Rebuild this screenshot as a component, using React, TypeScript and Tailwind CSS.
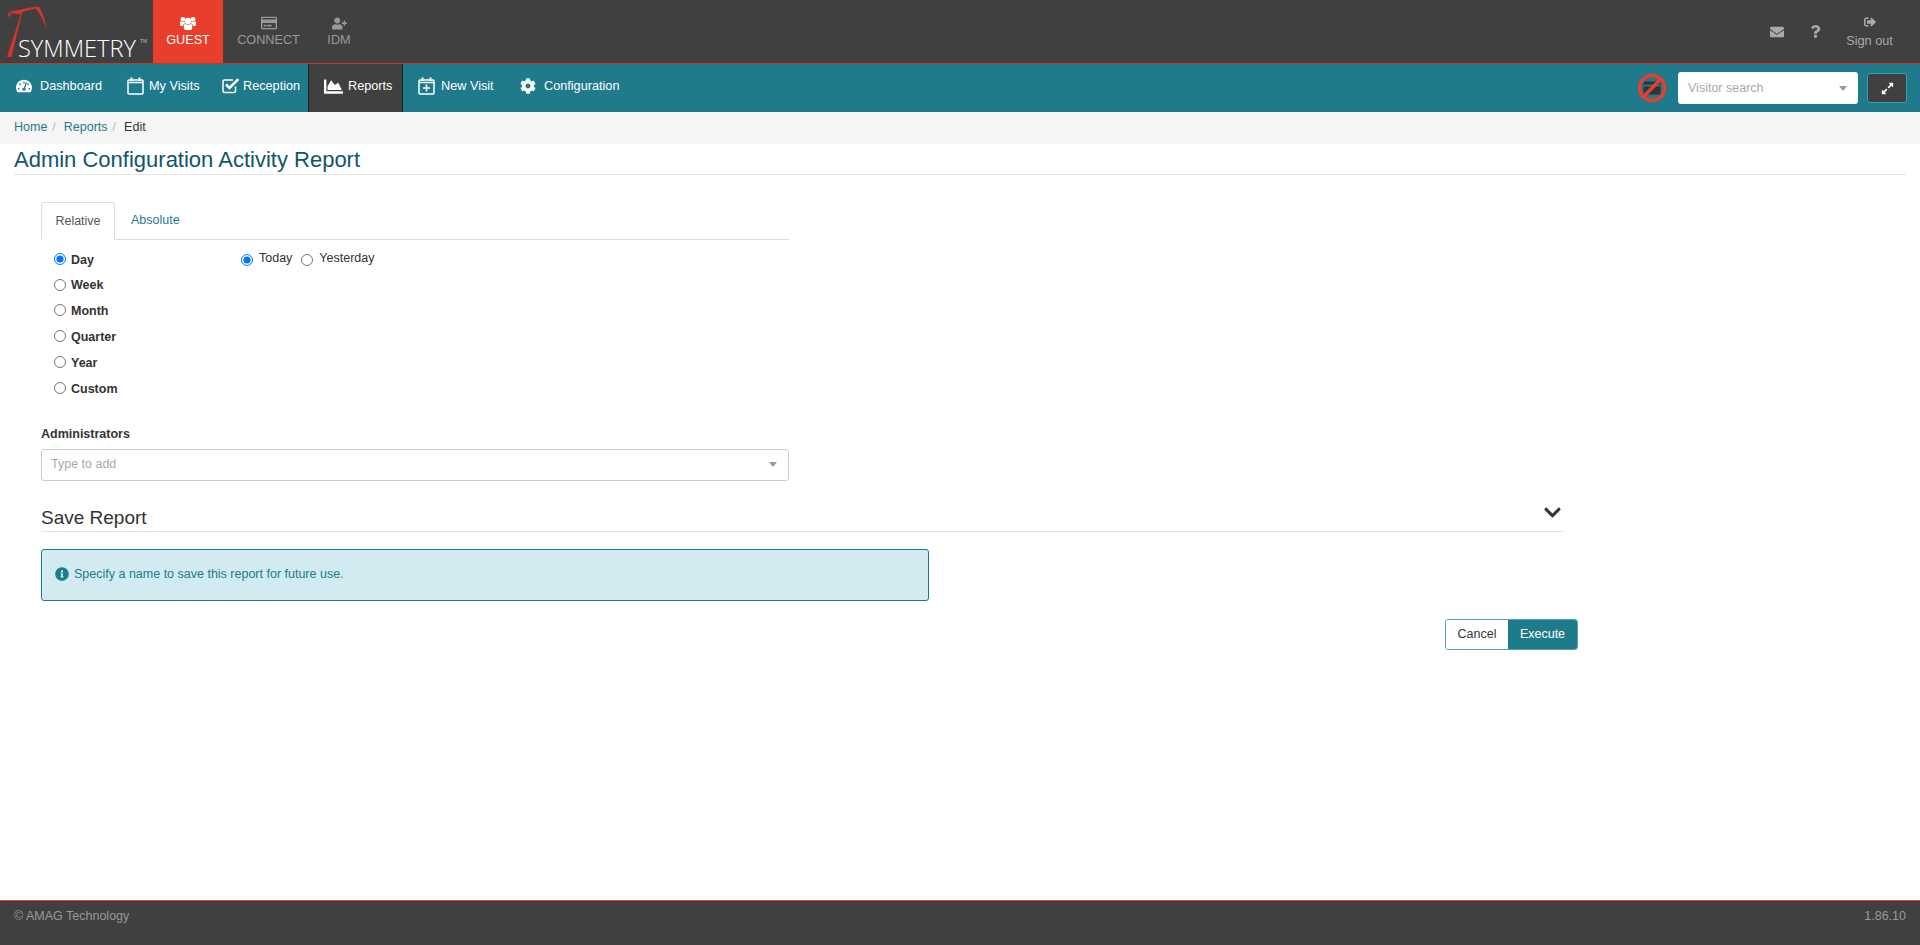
import {
  FaChartArea,
  FaChevronDown,
  FaCog,
  FaEnvelope,
  FaExpandAlt,
  FaInfoCircle,
  FaQuestion,
  FaRegCreditCard,
  FaSignOutAlt,
  FaTachometerAlt,
  FaUserPlus,
} from "react-icons/fa";
import type { ReactNode } from "react";

const UsersIcon = () => (
  <svg viewBox="0 0 16 14" className="h-[14px] w-[16px]" fill="currentColor">
    <circle cx="8" cy="5" r="3.3" />
    <circle cx="2.9" cy="3.2" r="2.3" />
    <circle cx="13.1" cy="3.2" r="2.3" />
    <path d="M3.8 10 C3.8 8.5 4.5 8 5.5 8 C6.5 9 9.5 9 10.5 8 C11.5 8 12.2 8.5 12.2 10 L12.2 12 C12.2 13.5 11 14 10 14 L6 14 C5 14 3.8 13.5 3.8 12 Z" />
    <path d="M0 6.5 C0 5.5 .6 5.3 1 5.3 C2 6.2 3.5 6.2 4.4 5.8 C4.6 6.8 5 7.2 5.2 7.5 C3.8 7.7 3 8.8 3 10 L1.2 10 C.5 10 0 9.5 0 8.8 Z" />
    <path d="M16 6.5 C16 5.5 15.4 5.3 15 5.3 C14 6.2 12.5 6.2 11.6 5.8 C11.4 6.8 11 7.2 10.8 7.5 C12.2 7.7 13 8.8 13 10 L14.8 10 C15.5 10 16 9.5 16 8.8 Z" />
  </svg>
);

const CalendarIcon = ({ plus }: { plus?: boolean }) => (
  <svg viewBox="0 0 17 18" className="h-[18px] w-[17px]" fill="none" stroke="currentColor">
    <rect x="1" y="3" width="15" height="14" rx="1" strokeWidth="1.5" />
    <path d="M1 5.5 H16" strokeWidth="1.5" />
    <path d="M4.5 .5 V4 M12.5 .5 V4" strokeWidth="2" />
    {plus && <path d="M8.5 7.5 V14.5 M5 11 H12" strokeWidth="1.6" />}
  </svg>
);

const CheckSquareIcon = () => (
  <svg viewBox="0 0 18 17" className="h-[17px] w-[18px]" fill="none" stroke="currentColor">
    <path d="M13.5 9.5 V14 C13.5 15 13 15.5 12 15.5 H2.5 C1.5 15.5 1 15 1 14 V4.5 C1 3.5 1.5 3 2.5 3 H11" strokeWidth="1.5" />
    <path d="M4 7.5 L7.5 11 L16.3 2.2" strokeWidth="2.6" />
  </svg>
);

type NavItem = {
  label: string;
  icon: ReactNode;
  className: string;
  active?: boolean;
};

const navItems: NavItem[] = [
  { label: "Dashboard", icon: <FaTachometerAlt className="mr-[8px] -mt-[4px] text-[16px]" />, className: "w-[111px] pl-[16px]" },
  { label: "My Visits", icon: <span className="mr-[5px] -mt-[5px]"><CalendarIcon /></span>, className: "w-[95px] pl-[16px]" },
  { label: "Reception", icon: <span className="mr-[3px] -mt-[6px]"><CheckSquareIcon /></span>, className: "w-[102px] pl-[16px]" },
  { label: "Reports", icon: <FaChartArea className="mr-[5px] -mt-1 text-[19px]" />, className: "w-[95px] pl-[15px]", active: true },
  { label: "New Visit", icon: <span className="mr-[6px] -mt-[5px]"><CalendarIcon plus /></span>, className: "w-[102px] pl-[15px]" },
  { label: "Configuration", icon: <FaCog className="mr-[8px] -mt-1 text-[16px]" />, className: "w-[115px] pl-[15px]" },
];

const ranges = ["Day", "Week", "Month", "Quarter", "Year", "Custom"];

const Logo = () => (
  <div className="relative h-[63px] w-[153px] shrink-0">
    <svg viewBox="0 0 150 64" className="absolute left-0 top-0 h-[64px] w-[150px]" fill="#d8332a">
      <path d="M8 16 C8 12.5 11 11 15 10.5 C23 9.5 32 6.5 39 6.5 C42 11 45 20 47 29 C43 20 39.5 13 36 8.5 C31 9 27 10.5 22 12.5 L21.5 14.5 L11 13.2 L10 17 Z" />
      <path d="M20.5 15 L21.5 15 C18.5 28 14.5 44 11.5 57 L7 57 C11 44 16.5 28 20.5 15 Z" />
    </svg>
    <span className="absolute left-[18px] top-[32px] font-['Open_Sans',sans-serif] text-[23.6px] font-light leading-[32px] text-white">
      SYMMETRY
    </span>
    <span className="absolute left-[140px] top-[38px] text-[5px] leading-[6px] text-[#bbbbbb]">TM</span>
  </div>
);

const Module = ({ label, icon, className }: { label: string; icon: ReactNode; className: string }) => (
  <div className={`flex h-[63px] flex-col items-center pt-[16px] ${className}`}>
    <div className="flex h-[14px] items-center">{icon}</div>
    <span className="text-[12.7px] leading-[20px]">{label}</span>
  </div>
);

const TopBar = () => (
  <header className="flex h-[64px] items-start border-b border-[#c0392b] bg-[#404040]">
    <Logo />
    <Module label="GUEST" icon={<UsersIcon />} className="w-[70px] bg-[#e83e2b] text-white" />
    <Module label="CONNECT" icon={<FaRegCreditCard className="text-[16px]" />} className="w-[90px] pl-[1px] text-[#999999]" />
    <Module label="IDM" icon={<FaUserPlus className="text-[15px]" />} className="ml-[14px] w-[24px] text-[#999999]" />
    <div className="ml-auto mr-[27px] flex items-start text-[#aaaaaa]">
      <FaEnvelope className="mr-[25px] mt-[25px] text-[14px]" />
      <FaQuestion className="mr-[24px] mt-[25px] text-[13px]" />
      <div className="flex w-[47px] flex-col items-center pt-[16px]">
        <FaSignOutAlt className="text-[12px]" />
        <span className="mt-[4px] whitespace-nowrap text-[12.7px] leading-[18px]">Sign out</span>
      </div>
    </div>
  </header>
);

const NoCardIcon = () => (
  <svg viewBox="0 0 30 30" className="h-[30px] w-[30px]">
    <rect x="6.5" y="8.5" width="17" height="13" rx="1.5" fill="#333333" />
    <rect x="6.5" y="11.5" width="17" height="2" fill="#1f7a8c" />
    <circle cx="15" cy="15" r="12.5" fill="none" stroke="#e83e2b" strokeWidth="3.5" />
    <path d="M6 24 L24 6" stroke="#e83e2b" strokeWidth="3.5" />
  </svg>
);

const NavBar = () => (
  <nav className="flex h-[48px] items-stretch bg-[#1f7a8c]">
    {navItems.map(({ label, icon, className, active }) => (
      <a
        key={label}
        className={`flex items-center whitespace-nowrap text-[12.7px] text-white ${className} ${
          active ? "border-x border-[#222222] bg-[#404040]" : ""
        }`}
      >
        {icon}
        <span className="-mt-[2px]">{label}</span>
      </a>
    ))}
    <div className="ml-auto mr-[13px] flex items-center">
      <NoCardIcon />
      <div className="ml-[11px] flex h-[32px] w-[180px] items-center justify-between rounded-[3px] bg-white pl-[10px] pr-[11px] text-[12.5px] text-[#aaaaaa]">
        <span>Visitor search</span>
        <span className="h-0 w-0 border-x-[4px] border-t-[5px] border-x-transparent border-t-[#999999]" />
      </div>
      <button className="ml-[9px] flex h-[30px] w-[40px] items-center justify-center rounded-[3px] border border-[#2fa3b8] bg-[#404040] text-white">
        <FaExpandAlt className="text-[13px]" />
      </button>
    </div>
  </nav>
);

const Breadcrumb = () => (
  <div className="flex h-[32px] items-center rounded-[4px] bg-[#f5f5f5] pb-[2px] pl-[14px] text-[12.5px] text-[#333333]">
    <a className="text-[#1f7a8c]">Home</a>
    <span className="ml-[5px] mr-[8px] text-[#bbbbbb]">/</span>
    <a className="text-[#1f7a8c]">Reports</a>
    <span className="ml-[5px] mr-[8px] text-[#bbbbbb]">/</span>
    <span>Edit</span>
  </div>
);

const Radio = ({ name, checked }: { name: string; checked?: boolean }) => (
  <input type="radio" name={name} defaultChecked={checked} className="m-0 h-[12px] w-[12px] shrink-0" />
);

const RangeForm = () => (
  <div className="flex w-[748px] items-start">
    <div className="flex w-[200px] flex-col pl-[13px] pt-[6px]">
      {ranges.map((range, i) => (
        <label key={range} className="flex h-[25.8px] items-center text-[12.5px] font-bold text-[#333333]">
          <Radio name="range" checked={i === 0} />
          <span className="ml-[5px] pt-[2px]">{range}</span>
        </label>
      ))}
    </div>
    <div className="flex items-center pt-[12px] text-[12.5px] text-[#333333]">
      <Radio name="day" checked />
      <span className="ml-[6px] -mt-[3px]">Today</span>
      <span className="ml-[9px] flex items-center">
        <Radio name="day" />
        <span className="ml-[6px] -mt-[3px]">Yesterday</span>
      </span>
    </div>
  </div>
);

const Content = () => (
  <main className="flex-1 bg-white">
    <div className="mx-[14px] h-[31px] border-b border-[#e5e5e5]">
      <h1 className="pt-[3px] text-[22px] leading-[25px] text-[#11566a]">Admin Configuration Activity Report</h1>
    </div>
    <div className="mt-[27px] pl-[41px] pr-[356px]">
      <div className="flex h-[38px] w-[748px] items-end border-b border-[#dddddd] text-[12.5px]">
        <div className="-mb-px flex h-[38px] w-[74px] items-center justify-center rounded-t-[3px] border border-[#dddddd] border-b-white bg-white text-[#555555]">
          Relative
        </div>
        <div className="flex h-[37px] items-center pl-[16px] text-[#1f7a8c]">Absolute</div>
      </div>
      <RangeForm />
      <label className="mt-[25px] block text-[12.5px] font-bold leading-[16px] text-[#333333]">Administrators</label>
      <div className="mt-[7px] flex h-[32px] w-[748px] items-center justify-between rounded-[3px] border border-[#cccccc] pl-[9px] pr-[11px] text-[12.5px] text-[#aaaaaa]">
        <span>Type to add</span>
        <span className="h-0 w-0 border-x-[4px] border-t-[5px] border-x-transparent border-t-[#999999]" />
      </div>
      <div className="mt-[19px] flex h-[32px] items-center justify-between border-b border-[#e2e2e2] text-[#333333]">
        <span className="pt-[5px] text-[19px]">Save Report</span>
        <FaChevronDown className="mr-[2px] -mt-[5px] text-[19px]" />
      </div>
      <div className="mt-[17px] flex h-[52px] w-[888px] items-center rounded-[3px] border border-[#1f7a8c] bg-[#d2ebf0] pl-[13px] text-[12.5px] text-[#1f7a8c]">
        <FaInfoCircle className="mr-[5px] -mt-[2px] text-[14px]" />
        <span>Specify a name to save this report for future use.</span>
      </div>
      <div className="-mr-[14px] mt-[18px] flex justify-end text-[12.5px]">
        <div className="flex h-[31px] overflow-hidden rounded-[3px] border border-[#4fa3b5]">
          <button className="w-[62px] bg-white text-[#333333]">Cancel</button>
          <button className="w-[69px] bg-[#1f7a8c] text-white">Execute</button>
        </div>
      </div>
    </div>
  </main>
);

const Footer = () => (
  <footer className="flex h-[45px] items-start justify-between border-t border-[#e83e2b] bg-[#404040] px-[14px] pt-[6px] text-[12.5px] text-[#999999]">
    <span>© AMAG Technology</span>
    <span>1.86.10</span>
  </footer>
);

export default function App() {
  return (
    <div className="flex h-[945px] flex-col overflow-hidden font-['Liberation_Sans',Arial,sans-serif]">
      <TopBar />
      <NavBar />
      <Breadcrumb />
      <Content />
      <Footer />
    </div>
  );
}
